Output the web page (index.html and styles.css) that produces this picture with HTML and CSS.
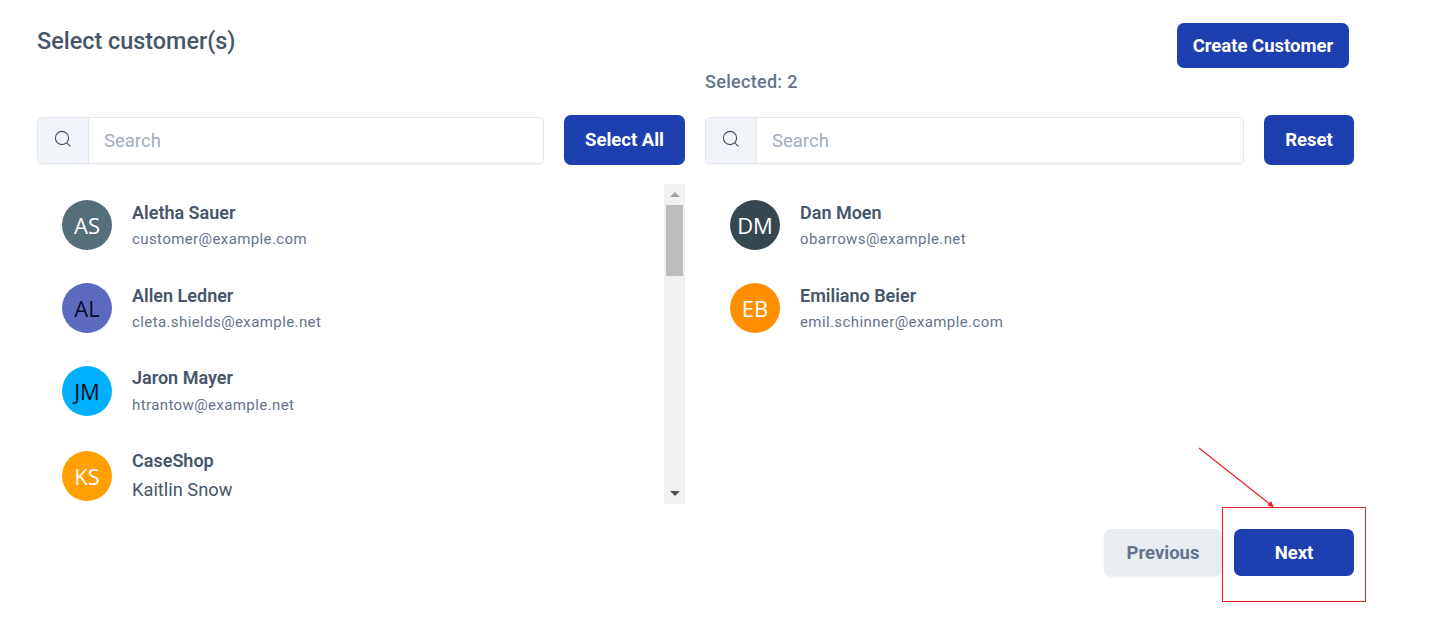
FILE: index.html
```html
<!DOCTYPE html>
<html lang="en">
<head>
    <meta charset="UTF-8">
    <title>Select customer(s)</title>
    <link rel="stylesheet" href="styles.css">
</head>
<body>
    <div class="page">
        <div class="header">
            <h2 class="title">Select customer(s)</h2>
            <button class="btn btn-create">Create Customer</button>
        </div>

        <div class="columns">
            <div class="column">
                <div class="toolbar">
                    <div class="search">
                        <span class="search-icon">
                            <svg width="18" height="18" viewBox="0 0 18 18" fill="none" stroke="#3f4f63" stroke-width="1.1"><circle cx="8" cy="8" r="6.6"/><path d="M12.8 12.8l3.6 3.6"/></svg>
                        </span>
                        <span class="placeholder">Search</span>
                    </div>
                    <button class="btn btn-select">Select All</button>
                </div>
                <div class="list-wrap">
                    <div class="list">
                        <div class="item">
                            <div class="avatar av-slate">AS</div>
                            <div class="info"><div class="name">Aletha Sauer</div><div class="email">customer@example.com</div></div>
                        </div>
                        <div class="item">
                            <div class="avatar av-indigo">AL</div>
                            <div class="info"><div class="name">Allen Ledner</div><div class="email">cleta.shields@example.net</div></div>
                        </div>
                        <div class="item">
                            <div class="avatar av-blue">JM</div>
                            <div class="info"><div class="name">Jaron Mayer</div><div class="email">htrantow@example.net</div></div>
                        </div>
                        <div class="item item-shop">
                            <div class="avatar av-amber">KS</div>
                            <div class="info"><div class="name">CaseShop</div><div class="contact">Kaitlin Snow</div></div>
                        </div>
                    </div>
                    <div class="scrollbar">
                        <div class="arrow arrow-up"></div>
                        <div class="thumb"></div>
                        <div class="arrow arrow-down"></div>
                    </div>
                </div>
            </div>

            <div class="column">
                <div class="selected-count">Selected: 2</div>
                <div class="toolbar">
                    <div class="search">
                        <span class="search-icon">
                            <svg width="18" height="18" viewBox="0 0 18 18" fill="none" stroke="#3f4f63" stroke-width="1.1"><circle cx="8" cy="8" r="6.6"/><path d="M12.8 12.8l3.6 3.6"/></svg>
                        </span>
                        <span class="placeholder">Search</span>
                    </div>
                    <button class="btn btn-reset">Reset</button>
                </div>
                <div class="list-wrap">
                    <div class="list">
                        <div class="item">
                            <div class="avatar av-dark">DM</div>
                            <div class="info"><div class="name">Dan Moen</div><div class="email">obarrows@example.net</div></div>
                        </div>
                        <div class="item">
                            <div class="avatar av-orange">EB</div>
                            <div class="info"><div class="name">Emiliano Beier</div><div class="email">emil.schinner@example.com</div></div>
                        </div>
                    </div>
                </div>
            </div>
        </div>

        <div class="footer">
            <button class="btn btn-prev">Previous</button>
            <button class="btn btn-next">Next</button>
        </div>
    </div>

    <!-- red annotation drawn over the screenshot -->
    <div class="mark-box"></div>
    <svg class="mark-arrow" width="90" height="70" viewBox="0 0 90 70">
        <path d="M1 1L73 58" stroke="#e8202a" stroke-width="1.2" fill="none"/>
        <path d="M76 60.5L69.5 58.5L73 54Z" fill="#e8202a"/>
    </svg>
</body>
</html>
```

FILE: styles.css
```css
* {
    box-sizing: border-box;
}

html, body {
    height: 100%;
}

body {
    margin: 0;
    background: #fff;
    font-family: Roboto, "Liberation Sans", sans-serif;
    color: #475569;
    overflow: hidden;
}

.page {
    padding: 23px 86px 0 37px;
}

.header {
    display: flex;
    justify-content: space-between;
    align-items: flex-start;
    padding-right: 5px;
}

.title {
    margin: 4px 0 0;
    font-size: 23.4px;
    line-height: 28px;
    font-weight: 500;
    color: #475569;
}

.btn {
    height: 50px;
    border: 0;
    border-radius: 7px;
    background: #1e3faf;
    color: #fff;
    font-family: inherit;
    font-size: 18.5px;
    font-weight: 700;
    text-align: center;
}

.btn-create {
    width: 172px;
    height: 45px;
}

.btn-select {
    width: 121px;
    padding-bottom: 2px;
}

.btn-reset {
    width: 90px;
    padding-bottom: 2px;
}

.columns {
    display: grid;
    grid-template-columns: 648px 649px;
    gap: 20px;
    margin-top: 47px;
}

.column {
    position: relative;
}

.selected-count {
    position: absolute;
    top: -43px;
    left: 0;
    font-size: 18px;
    line-height: 20px;
    letter-spacing: 0.3px;
    font-weight: 500;
    color: #64748b;
}

.toolbar {
    display: flex;
    align-items: center;
    gap: 20px;
}

.search {
    flex: 1;
    height: 47px;
    margin-top: 1px;
    display: flex;
    align-items: center;
    border: 1px solid #e2e8f0;
    border-radius: 5px;
    box-shadow: 0 1px 2px rgba(15, 23, 42, 0.05);
    overflow: hidden;
}

.search-icon {
    width: 51px;
    height: 100%;
    flex: none;
    display: flex;
    justify-content: center;
    padding-top: 12px;
    background: #f1f5f9;
    border-right: 1px solid #e2e8f0;
}

.placeholder {
    padding-left: 15px;
    font-size: 18.5px;
    color: #a0aec0;
}

.list-wrap {
    display: flex;
    height: 320px;
    margin-top: 19px;
}

.list {
    flex: 1;
    overflow: hidden;
    padding: 16px 0 0 25px;
}

.item {
    display: flex;
    gap: 20px;
    height: 82.75px;
}

.item-shop .avatar {
    margin-top: 3px;
}

.avatar {
    width: 50px;
    height: 50px;
    flex: none;
    border-radius: 50%;
    display: flex;
    align-items: center;
    justify-content: center;
    font-family: "Open Sans", sans-serif;
    font-size: 22px;
    color: #fff;
}

.av-slate { background: #546e7a; }
.av-indigo { background: #5c6bc0; color: #0b0b2a; }
.av-blue { background: #00b0ff; color: #02131c; }
.av-amber { background: #ffa000; }
.av-dark { background: #37474f; }
.av-orange { background: #ff8f00; }

.info {
    padding-top: 0.85px;
}

.name {
    font-size: 18px;
    line-height: 24px;
    font-weight: 600;
    color: #475569;
}

.email {
    margin-top: 4.4px;
    font-size: 15px;
    line-height: 20px;
    letter-spacing: 0.4px;
    color: #64748b;
}

.contact {
    margin-top: 5px;
    font-size: 18.3px;
    line-height: 24px;
    color: #475569;
}

.scrollbar {
    width: 21px;
    flex: none;
    display: flex;
    flex-direction: column;
    align-items: center;
    background: #f1f1f1;
}

.arrow {
    width: 0;
    height: 0;
    border-left: 5px solid transparent;
    border-right: 5px solid transparent;
}

.arrow-up {
    margin-top: 8px;
    border-bottom: 5px solid #a3a3a3;
}

.thumb {
    width: 17px;
    height: 71px;
    margin-top: 8px;
    background: #bdbdbd;
}

.arrow-down {
    margin-top: auto;
    margin-bottom: 8px;
    border-top: 5px solid #505050;
}

.footer {
    display: flex;
    justify-content: flex-end;
    gap: 12px;
    margin-top: 25px;
}

.btn-prev,
.btn-next {
    width: 120px;
    height: 47px;
}

.btn-prev {
    width: 118px;
    background: #e9edf2;
    color: #64748b;
    box-shadow: 0 1px 2px rgba(15, 23, 42, 0.08);
}

.mark-box {
    position: absolute;
    left: 1222px;
    top: 507px;
    width: 144px;
    height: 95px;
    border: 1px solid #e8202a;
}

.mark-arrow {
    position: absolute;
    left: 1198px;
    top: 447px;
}
```
